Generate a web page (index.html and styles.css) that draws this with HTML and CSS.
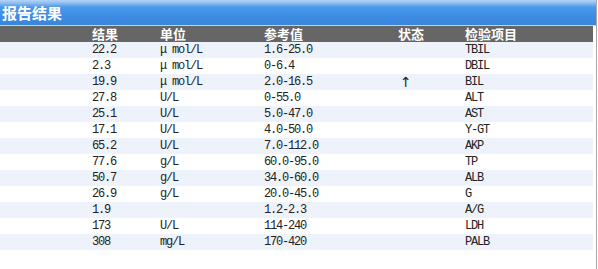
FILE: index.html
```html
<!DOCTYPE html>
<html lang="zh">
<head>
<meta charset="utf-8">
<link rel="stylesheet" href="styles.css">
</head>
<body>
<div class="panel">
  <div class="title">报告结果</div>
  <div class="grid">
    <div class="row head"><span></span><span>结果</span><span>单位</span><span>参考值</span><span>状态</span><span>检验项目</span></div>
    <div class="row odd"><span></span><span>22.2</span><span><i class="mu">μ</i>mol/L</span><span>1.6-25.0</span><span></span><span>TBIL</span></div>
    <div class="row"><span></span><span>2.3</span><span><i class="mu">μ</i>mol/L</span><span>0-6.4</span><span></span><span>DBIL</span></div>
    <div class="row odd"><span></span><span>19.9</span><span><i class="mu">μ</i>mol/L</span><span>2.0-16.5</span><span class="st">↑</span><span>BIL</span></div>
    <div class="row"><span></span><span>27.8</span><span>U/L</span><span>0-55.0</span><span></span><span>ALT</span></div>
    <div class="row odd"><span></span><span>25.1</span><span>U/L</span><span>5.0-47.0</span><span></span><span>AST</span></div>
    <div class="row"><span></span><span>17.1</span><span>U/L</span><span>4.0-50.0</span><span></span><span>Y-GT</span></div>
    <div class="row odd"><span></span><span>65.2</span><span>U/L</span><span>7.0-112.0</span><span></span><span>AKP</span></div>
    <div class="row"><span></span><span>77.6</span><span>g/L</span><span>60.0-95.0</span><span></span><span>TP</span></div>
    <div class="row odd"><span></span><span>50.7</span><span>g/L</span><span>34.0-60.0</span><span></span><span>ALB</span></div>
    <div class="row"><span></span><span>26.9</span><span>g/L</span><span>20.0-45.0</span><span></span><span>G</span></div>
    <div class="row odd"><span></span><span>1.9</span><span></span><span>1.2-2.3</span><span></span><span>A/G</span></div>
    <div class="row"><span></span><span>173</span><span>U/L</span><span>114-240</span><span></span><span>LDH</span></div>
    <div class="row odd"><span></span><span>308</span><span>mg/L</span><span>170-420</span><span></span><span>PALB</span></div>
  </div>
</div>
</body>
</html>
```
FILE: styles.css
```css
html, body {
  margin: 0;
  padding: 0;
  background: #ffffff;
}
.panel {
  width: 596px;
  height: 269px;
  border-right: 1px solid #a8a8a8;
  box-sizing: content-box;
}
.title {
  height: 25px;
  border-bottom: 1px solid #b9d6f5;
  background: linear-gradient(#b4d4f6 0px, #8fbff2 3px, #4c9aea 7px, #3f8fe6 14px, #3a85dc 25px);
  color: #ffffff;
  font-family: "Noto Sans CJK SC", sans-serif;
  font-weight: bold;
  font-size: 15px;
  line-height: 25px;
  padding-left: 2px;
}
.grid {
  width: 593px;
}
.row {
  display: grid;
  grid-template-columns: 92px 68px 104px 134px 67px 1fr;
  height: 16px;
  align-items: center;
  font-family: "Liberation Mono", monospace;
  font-size: 12px;
  letter-spacing: -1.2px;
  color: #222222;
  white-space: nowrap;
}
.row.odd {
  background: #eef3fb;
}
.row.head {
  background: #666666;
  color: #ffffff;
  font-family: "Noto Sans CJK SC", sans-serif;
  font-weight: bold;
  font-size: 13px;
  letter-spacing: 0;
  line-height: 16px;
}
.mu {
  display: inline-block;
  width: 12px;
  font-style: normal;
  letter-spacing: 0;
}
.st {
  padding-left: 2px;
  font-family: "DejaVu Sans", sans-serif;
  font-size: 14px;
  line-height: 16px;
  letter-spacing: 0;
}
```
